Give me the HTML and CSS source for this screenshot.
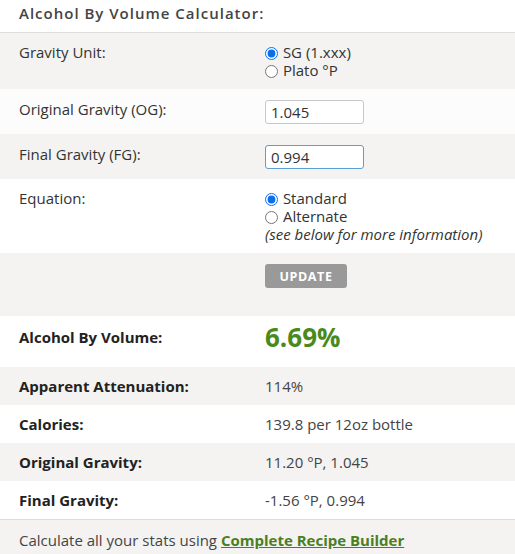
FILE: index.html
```html
<!DOCTYPE html>
<html lang="en">
<head>
    <meta charset="UTF-8">
    <title>Alcohol By Volume Calculator</title>
    <link rel="stylesheet" href="styles.css">
</head>
<body>
    <div class="calc">
        <h3 class="calc-title">Alcohol By Volume Calculator:</h3>
        <form id="abvForm">
            <div class="row shade">
                <div class="label">Gravity Unit:</div>
                <div class="value">
                    <label class="opt"><input type="radio" name="unit" value="sg" checked> SG (1.xxx)</label>
                    <label class="opt"><input type="radio" name="unit" value="plato"> Plato °P</label>
                </div>
            </div>
            <div class="row light">
                <div class="label">Original Gravity (OG):</div>
                <div class="value"><input type="text" class="grav" name="og" value="1.045"></div>
            </div>
            <div class="row shade">
                <div class="label">Final Gravity (FG):</div>
                <div class="value"><input type="text" class="grav active" name="fg" value="0.994"></div>
            </div>
            <div class="row">
                <div class="label">Equation:</div>
                <div class="value">
                    <label class="opt"><input type="radio" name="eq" value="standard" checked> Standard</label>
                    <label class="opt"><input type="radio" name="eq" value="alternate"> Alternate</label>
                    <em class="note">(see below for more information)</em>
                </div>
            </div>
            <div class="row shade submit-row">
                <div class="label"></div>
                <div class="value"><button type="submit">Update</button></div>
            </div>
        </form>

        <div class="row abv-row">
            <div class="label bold">Alcohol By Volume:</div>
            <div class="value abv">6.69%</div>
        </div>
        <div class="row shade">
            <div class="label bold">Apparent Attenuation:</div>
            <div class="value">114%</div>
        </div>
        <div class="row">
            <div class="label bold">Calories:</div>
            <div class="value">139.8 per 12oz bottle</div>
        </div>
        <div class="row shade">
            <div class="label bold">Original Gravity:</div>
            <div class="value">11.20 °P, 1.045</div>
        </div>
        <div class="row">
            <div class="label bold">Final Gravity:</div>
            <div class="value">-1.56 °P, 0.994</div>
        </div>

        <div class="calc-footer">
            Calculate all your stats using <a href="#">Complete Recipe Builder</a>
        </div>
    </div>
</body>
</html>
```

FILE: styles.css
```css
body {
    margin: 0;
    font-family: 'Open Sans', sans-serif;
    font-size: 15px;
    color: #333;
    background: #fff;
}

.calc {
    width: 515px;
}

.calc-title {
    margin: 0;
    padding: 3px 19px 9px;
    font-size: 15px;
    line-height: 20px;
    font-weight: 600;
    letter-spacing: 1px;
    color: #444;
    border-bottom: 1px solid #dcdcdc;
}

.row {
    display: grid;
    grid-template-columns: 246px 1fr;
    padding: 10px 19px;
    line-height: 18px;
    background: #fff;
}
.shade {
    background: #f4f3f1;
}
.light {
    background: #fcfcfc;
}

.label {
    color: #333;
}
.bold {
    font-weight: 700;
    color: #222;
}
.value {
    color: #444;
}

.opt {
    display: block;
    color: #333;
}
.opt input {
    width: 13px;
    height: 13px;
    margin: 0 1px 0 0;
    vertical-align: -2px;
    accent-color: #0a6ef0;
}
.note {
    display: block;
    color: #333;
}

.row.light,
.row.shade:nth-of-type(3) {
    padding-top: 11px;
    padding-bottom: 10px;
}
.grav {
    display: block;
    width: 99px;
    height: 24px;
    box-sizing: border-box;
    padding: 2px 5px;
    font-family: 'Open Sans', sans-serif;
    font-size: 15px;
    color: #333;
    border: 1px solid #c8c8c8;
    border-radius: 3px;
    background: #fff;
}
.grav.active {
    border-color: #5a9fd6;
    outline: none;
}

.submit-row {
    padding-top: 11px;
    padding-bottom: 28px;
}
button {
    width: 82px;
    height: 24px;
    padding: 0;
    background-color: #999;
    color: #fff;
    border: none;
    border-radius: 3px;
    font-family: 'Open Sans', sans-serif;
    font-size: 12.5px;
    font-weight: 700;
    letter-spacing: 0.6px;
    text-transform: uppercase;
    cursor: pointer;
}

.abv-row {
    padding-top: 10px;
    padding-bottom: 19px;
}
.abv-row .label {
    line-height: 22px;
}
.abv {
    font-size: 26px;
    line-height: 22px;
    font-weight: 700;
    color: #4a8a1c;
}

.calc-footer {
    padding: 11px 19px 6px;
    line-height: 18px;
    color: #444;
    background: #f4f3f1;
    border-top: 1px solid #dcdcdc;
}
.calc-footer a {
    font-weight: 700;
    color: #4a7f1f;
}
```
